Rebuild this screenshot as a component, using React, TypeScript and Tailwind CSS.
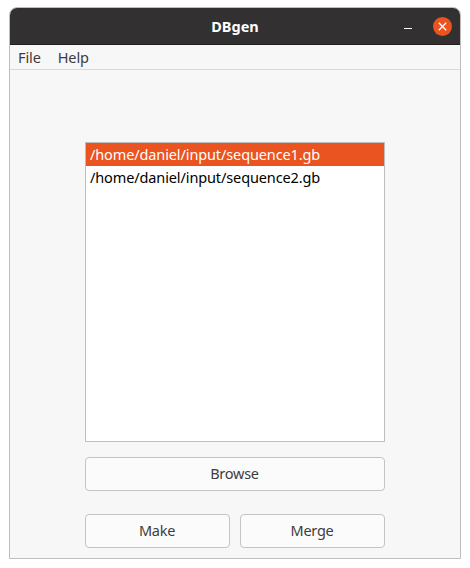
import React from 'react';

function Button({ children, className }: { children: string; className: string }) {
  return (
    <button className={`flex h-[34px] items-center justify-center rounded-[4px] border border-[#c4c4c4] bg-[#fbfbfb] pb-0.5 pr-px tracking-[-0.25px] text-[#3d3d3d] ${className}`}>
      {children}
    </button>
  );
}

export default function App() {
  return (
    <div className="h-[568px] w-[470px] bg-white pl-[9px] pt-[7px] font-['Noto_Sans',sans-serif] text-[14.5px] leading-5">
      <main className="flex h-[552px] w-[452px] flex-col overflow-hidden rounded-t-[8px] border border-[#bebebe] bg-[#f7f7f7]">
        <header className="grid h-[37px] shrink-0 grid-cols-3 items-center border-b border-[#1f1e1e] bg-[#323030] text-white">
          <span />
          <h1 className="text-center font-bold">DBgen</h1>
          <div className="flex items-center justify-end gap-[21px] pr-2">
            <span className="mt-[5px] h-px w-2 bg-white" />
            <span className="flex size-[19px] items-center justify-center rounded-full bg-[#e95420]">
              <svg width="9" height="9" viewBox="0 0 9 9" fill="none" stroke="white" strokeWidth="1.3"><path d="M.8.8l7.4 7.4M8.2.8L.8 8.2" /></svg>
            </span>
          </div>
        </header>
        <nav className="flex h-[25px] shrink-0 items-center gap-[17px] border-b border-[#dadada] px-2 tracking-[-0.12px] text-[#3d3d3d]">
          <span>File</span>
          <span>Help</span>
        </nav>
        <section className="ml-[75px] mt-[72px] w-[300px]">
          <ul className="h-[300px] border border-[#bebebe] bg-white tracking-[-0.12px] text-black">
            <li className="flex h-[23px] items-center bg-[#e95420] pb-0.5 pl-1 text-white">/home/daniel/input/sequence1.gb</li>
            <li className="flex h-[23px] items-center pb-0.5 pl-1">/home/daniel/input/sequence2.gb</li>
          </ul>
          <Button className="mt-[15px] w-full">Browse</Button>
          <div className="mt-[23px] flex gap-[10px]">
            <Button className="w-[145px]">Make</Button>
            <Button className="w-[145px]">Merge</Button>
          </div>
        </section>
      </main>
    </div>
  );
}
